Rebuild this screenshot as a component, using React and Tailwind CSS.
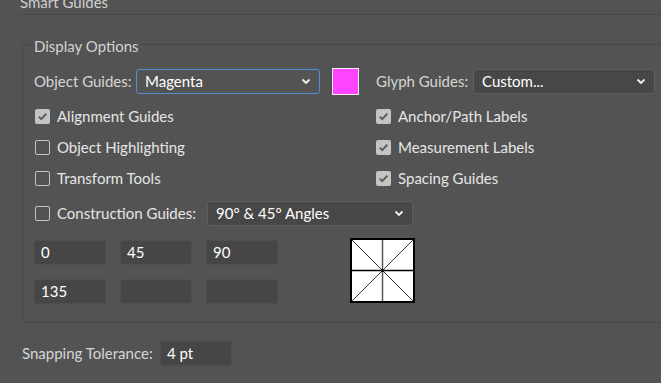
import React from "react";

const Chevron = () => (
  <svg width="10" height="7" viewBox="0 0 10 7" className="shrink-0">
    <path d="M1.5 1.5 L5 5 L8.5 1.5" fill="none" stroke="#f2f2f2" strokeWidth="1.8" />
  </svg>
);

const Check = ({ checked, label }) => (
  <label className="flex items-center gap-[7px] h-[31px]">
    <span
      className={
        checked
          ? "w-[15px] h-[15px] rounded-[2px] bg-[#c4c4c4] flex items-center justify-center"
          : "w-[15px] h-[15px] rounded-[2px] border border-[#c4c4c4]"
      }
    >
      {checked && (
        <svg width="11" height="11" viewBox="0 0 11 11">
          <path d="M1.8 5.6 L4.3 8.1 L9.3 2.6" fill="none" stroke="#5b5b5b" strokeWidth="2" />
        </svg>
      )}
    </span>
    <span className="text-[#e6e6e6]">{label}</span>
  </label>
);

const Select = ({ value, focused, className }) => (
  <div
    className={
      "h-[25px] flex items-center justify-between pl-[8px] pr-[8px] rounded-[3px] text-white " +
      (focused ? "border-[1.5px] border-[#4d8ed4] bg-[#535353] " : "border border-[#5f5f5f] bg-[#474747] ") +
      className
    }
  >
    <span>{value}</span>
    <Chevron />
  </div>
);

const Field = ({ value }) => (
  <div className="w-[72px] h-[25px] rounded-[3px] bg-[#464646] border border-[#4e4e4e] pl-[6px] flex items-center text-white">
    {value}
  </div>
);

const Diagram = () => (
  <svg width="65" height="65" viewBox="0 0 65 65">
    <rect x="1" y="1" width="63" height="63" fill="#ffffff" stroke="#000" strokeWidth="2" />
    <line x1="2" y1="2" x2="63" y2="63" stroke="#333" strokeWidth="1" />
    <line x1="63" y1="2" x2="2" y2="63" stroke="#333" strokeWidth="1" />
    <line x1="2" y1="32.5" x2="63" y2="32.5" stroke="#000" strokeWidth="1.5" />
    <line x1="32.5" y1="2" x2="32.5" y2="63" stroke="#555" strokeWidth="1.5" />
    <circle cx="32.5" cy="32.5" r="1.6" fill="#111" />
  </svg>
);

export default function App() {
  return (
    <div
      className="w-[661px] h-[383px] overflow-hidden bg-[#535353] text-[15px] text-[#d6d6d6]"
      style={{ fontFamily: "Lato, 'Liberation Sans', sans-serif" }}
    >
      <div className="ml-[20px] -mt-[8px] h-[23px] border-b border-[#474747] leading-[20px] text-[#cfcfcf]">
        Smart Guides
      </div>

      <fieldset className="ml-[22px] mt-[20px] w-[650px] h-[288px] border border-[#484848] rounded-[4px] pl-[11px] pt-[8px]">
        <legend className="-ml-[1px] px-[1px] pt-[3px] leading-[16px] text-[#d2d2d2]">Display Options</legend>

        <div className="flex items-center h-[26px] mt-[6px]">
          <span className="w-[102px]">Object Guides:</span>
          <Select value="Magenta" focused className="w-[184px]" />
          <div className="ml-[12px] w-[27px] h-[27px] bg-[#ff44ff] border border-[#f0f0f0]" />
          <span className="ml-[17px] w-[97px]">Glyph Guides:</span>
          <Select value="Custom..." className="w-[182px]" />
        </div>

        <div className="grid grid-cols-[341px_1fr] mt-[7px]">
          <div className="flex flex-col pl-[1px]">
            <Check checked label="Alignment Guides" />
            <Check label="Object Highlighting" />
            <Check label="Transform Tools" />
          </div>
          <div className="flex flex-col pl-[1px]">
            <Check checked label="Anchor/Path Labels" />
            <Check checked label="Measurement Labels" />
            <Check checked label="Spacing Guides" />
          </div>
        </div>

        <div className="flex items-center mt-[4px] pl-[1px]">
          <div className="w-[172px]">
            <Check label="Construction Guides:" />
          </div>
          <Select value="90° & 45° Angles" className="w-[206px]" />
        </div>

        <div className="flex items-start mt-[9px]">
          <div className="grid grid-cols-[72px_72px_72px] gap-x-[14px] gap-y-[14px] mt-[2px]">
            <Field value="0" />
            <Field value="45" />
            <Field value="90" />
            <Field value="135" />
            <Field value="" />
            <Field value="" />
          </div>
          <div className="ml-[72px]">
            <Diagram />
          </div>
        </div>
      </fieldset>

      <div className="flex items-center ml-[22px] mt-[18px]">
        <span className="w-[138px]">Snapping Tolerance:</span>
        <div className="w-[72px] h-[25px] rounded-[3px] bg-[#464646] border border-[#4e4e4e] pl-[6px] flex items-center text-white">
          4 pt
        </div>
      </div>
    </div>
  );
}
